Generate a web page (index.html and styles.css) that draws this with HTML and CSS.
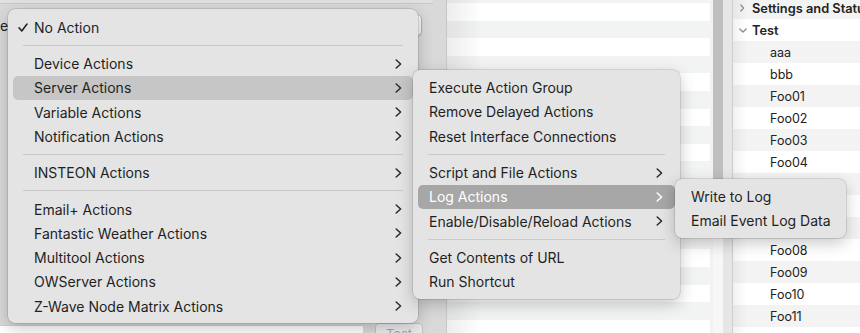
FILE: index.html
```html
<!DOCTYPE html>
<html lang="en">
<head>
<meta charset="utf-8">
<title>Actions menu</title>
<link rel="stylesheet" href="styles.css">
</head>
<body>
<div class="window">
  <section class="pane-left">
    <div class="topband"></div>
    <div class="form-row">
      <span class="form-label">e</span>
      <div class="popup"></div>
    </div>
    <div class="spacer"></div>
    <div class="bottom-row">
      <div class="field"></div>
      <div class="btn">Test</div>
    </div>
  </section>
  <section class="pane-list"></section>
  <section class="scroller">
    <div class="s-edge"></div>
    <div class="s-track"><div class="s-thumb"></div></div>
    <div class="s-gap"></div>
  </section>
  <section class="pane-outline">
    <div class="orow group first">
      <svg class="disc" width="13" height="10" viewBox="0 0 13 10"><path d="M1.8 2 L4.6 5 L1.8 8" fill="none" stroke="#8a8a8a" stroke-width="1.2" stroke-linecap="round" stroke-linejoin="round"/></svg>
      <span>Settings and Status</span>
    </div>
    <div class="orow group">
      <svg class="disc" width="13" height="10" viewBox="0 0 13 10"><path d="M0.8 4 L4 7 L7.2 4" fill="none" stroke="#8a8a8a" stroke-width="1.2" stroke-linecap="round" stroke-linejoin="round"/></svg>
      <span>Test</span>
    </div>
    <div class="orow child">aaa</div>
    <div class="orow child">bbb</div>
    <div class="orow child">Foo01</div>
    <div class="orow child">Foo02</div>
    <div class="orow child">Foo03</div>
    <div class="orow child">Foo04</div>
    <div class="orow child">Foo05</div>
    <div class="orow child">Foo06</div>
    <div class="orow child">Foo07</div>
    <div class="orow child">Foo08</div>
    <div class="orow child">Foo09</div>
    <div class="orow child">Foo10</div>
    <div class="orow child">Foo11</div>
  </section>
</div>

<div class="menu menu-main">
  <div class="item"><span class="check"><svg width="10" height="9" viewBox="0 0 10 9"><path d="M1 4.8 L3.8 8 L9 1" fill="none" stroke="#1f1f1f" stroke-width="1.5" stroke-linecap="round" stroke-linejoin="round"/></svg></span><span class="label">No Action</span></div>
  <div class="sep"></div>
  <div class="item"><span class="check"></span><span class="label">Device Actions</span><svg class="chev" width="7" height="10" viewBox="0 0 7 10"><path d="M1.2 1 L5.6 5 L1.2 9" fill="none" stroke="currentColor" stroke-width="1.5" stroke-linecap="round" stroke-linejoin="round"/></svg></div>
  <div class="item hl"><span class="check"></span><span class="label">Server Actions</span><svg class="chev" width="7" height="10" viewBox="0 0 7 10"><path d="M1.2 1 L5.6 5 L1.2 9" fill="none" stroke="currentColor" stroke-width="1.5" stroke-linecap="round" stroke-linejoin="round"/></svg></div>
  <div class="item"><span class="check"></span><span class="label">Variable Actions</span><svg class="chev" width="7" height="10" viewBox="0 0 7 10"><path d="M1.2 1 L5.6 5 L1.2 9" fill="none" stroke="currentColor" stroke-width="1.5" stroke-linecap="round" stroke-linejoin="round"/></svg></div>
  <div class="item"><span class="check"></span><span class="label">Notification Actions</span><svg class="chev" width="7" height="10" viewBox="0 0 7 10"><path d="M1.2 1 L5.6 5 L1.2 9" fill="none" stroke="currentColor" stroke-width="1.5" stroke-linecap="round" stroke-linejoin="round"/></svg></div>
  <div class="sep"></div>
  <div class="item"><span class="check"></span><span class="label">INSTEON Actions</span><svg class="chev" width="7" height="10" viewBox="0 0 7 10"><path d="M1.2 1 L5.6 5 L1.2 9" fill="none" stroke="currentColor" stroke-width="1.5" stroke-linecap="round" stroke-linejoin="round"/></svg></div>
  <div class="sep"></div>
  <div class="item"><span class="check"></span><span class="label">Email+ Actions</span><svg class="chev" width="7" height="10" viewBox="0 0 7 10"><path d="M1.2 1 L5.6 5 L1.2 9" fill="none" stroke="currentColor" stroke-width="1.5" stroke-linecap="round" stroke-linejoin="round"/></svg></div>
  <div class="item"><span class="check"></span><span class="label">Fantastic Weather Actions</span><svg class="chev" width="7" height="10" viewBox="0 0 7 10"><path d="M1.2 1 L5.6 5 L1.2 9" fill="none" stroke="currentColor" stroke-width="1.5" stroke-linecap="round" stroke-linejoin="round"/></svg></div>
  <div class="item"><span class="check"></span><span class="label">Multitool Actions</span><svg class="chev" width="7" height="10" viewBox="0 0 7 10"><path d="M1.2 1 L5.6 5 L1.2 9" fill="none" stroke="currentColor" stroke-width="1.5" stroke-linecap="round" stroke-linejoin="round"/></svg></div>
  <div class="item"><span class="check"></span><span class="label">OWServer Actions</span><svg class="chev" width="7" height="10" viewBox="0 0 7 10"><path d="M1.2 1 L5.6 5 L1.2 9" fill="none" stroke="currentColor" stroke-width="1.5" stroke-linecap="round" stroke-linejoin="round"/></svg></div>
  <div class="item"><span class="check"></span><span class="label">Z-Wave Node Matrix Actions</span><svg class="chev" width="7" height="10" viewBox="0 0 7 10"><path d="M1.2 1 L5.6 5 L1.2 9" fill="none" stroke="currentColor" stroke-width="1.5" stroke-linecap="round" stroke-linejoin="round"/></svg></div>
</div>

<div class="menu menu-sub1">
  <div class="item"><span class="label">Execute Action Group</span></div>
  <div class="item"><span class="label">Remove Delayed Actions</span></div>
  <div class="item"><span class="label">Reset Interface Connections</span></div>
  <div class="sep"></div>
  <div class="item"><span class="label">Script and File Actions</span><svg class="chev" width="7" height="10" viewBox="0 0 7 10"><path d="M1.2 1 L5.6 5 L1.2 9" fill="none" stroke="currentColor" stroke-width="1.5" stroke-linecap="round" stroke-linejoin="round"/></svg></div>
  <div class="item sel"><span class="label">Log Actions</span><svg class="chev" width="7" height="10" viewBox="0 0 7 10"><path d="M1.2 1 L5.6 5 L1.2 9" fill="none" stroke="currentColor" stroke-width="1.5" stroke-linecap="round" stroke-linejoin="round"/></svg></div>
  <div class="item"><span class="label">Enable/Disable/Reload Actions</span><svg class="chev" width="7" height="10" viewBox="0 0 7 10"><path d="M1.2 1 L5.6 5 L1.2 9" fill="none" stroke="currentColor" stroke-width="1.5" stroke-linecap="round" stroke-linejoin="round"/></svg></div>
  <div class="sep"></div>
  <div class="item"><span class="label">Get Contents of URL</span></div>
  <div class="item"><span class="label">Run Shortcut</span></div>
</div>

<div class="menu menu-sub2">
  <div class="item"><span class="label">Write to Log</span></div>
  <div class="item"><span class="label">Email Event Log Data</span></div>
</div>
</body>
</html>
```

FILE: styles.css
```css
* { box-sizing: border-box; margin: 0; padding: 0; }

html, body {
  width: 860px;
  height: 333px;
  overflow: hidden;
}

body {
  position: relative;
  font-family: "Inter", "Liberation Sans", sans-serif;
  color: #1f1f1f;
  background: #d9d9d9;
}

.window {
  display: grid;
  grid-template-columns: 447px 263px 22px 128px;
  height: 333px;
}

/* left settings pane */
.pane-left {
  display: flex;
  flex-direction: column;
  background: #d9d9d9;
  border-right: 1px solid #c8c8c8;
  overflow: hidden;
}

.topband {
  height: 4px;
  margin-right: 13px;
  background: #e0e0e0;
  border-bottom: 1px solid #c9c9c9;
}

.form-row {
  display: flex;
  align-items: center;
  height: 22px;
  margin-top: 10px;
}

.form-label {
  width: 8px;
  font-size: 14px;
  text-align: right;
}

.popup {
  width: 382px;
  height: 22px;
  margin-left: 32px;
  background: #f5f5f5;
  border: 1px solid #b3b3b3;
  border-radius: 5px;
  box-shadow: 0 1px 1px rgba(0, 0, 0, 0.12);
}

.spacer { flex: 1; }

.bottom-row {
  display: flex;
  align-items: flex-start;
  height: 10px;
}

.field {
  width: 363px;
  height: 20px;
  margin-top: 2px;
  background: #ffffff;
  border-top: 1px solid #cfcfcf;
}

.btn {
  width: 48px;
  height: 22px;
  margin-left: 12px;
  background: #ececec;
  border: 1px solid #c4c4c4;
  border-radius: 4px;
  font-size: 13px;
  line-height: 20px;
  text-align: center;
  color: #a9a9a9;
}

/* middle list */
.pane-list {
  background:
    linear-gradient(to right, rgba(0, 0, 0, 0.07), rgba(0, 0, 0, 0) 36px),
    repeating-linear-gradient(to bottom, #f2f3f3 -14.6px, #f2f3f3 3px, #ffffff 3px, #ffffff 20.6px);
}

.scroller {
  display: flex;
}

.s-edge {
  width: 3px;
  background: #f2f2f2;
}

.s-track {
  width: 10px;
  background: #f7f7f7;
}

.s-thumb {
  height: 205px;
  background: #bfbfbf;
  border-radius: 0 0 5px 5px;
}

.s-gap {
  flex: 1;
  background: #e6e6e6;
}

/* outline pane */
.pane-outline {
  border-left: 1px solid #cdcdcd;
  background:
    linear-gradient(to right, rgba(0, 0, 0, 0.05), rgba(0, 0, 0, 0) 14px),
    repeating-linear-gradient(to bottom, #f3f3f3 -3px, #f3f3f3 19px, #ffffff 19px, #ffffff 41px);
  overflow: hidden;
  white-space: nowrap;
}

.orow {
  display: flex;
  align-items: center;
  height: 22px;
  font-size: 12.5px;
  color: #222;
}

.orow.first { margin-top: -3px; }

.orow.group {
  padding-left: 6px;
  font-size: 12.8px;
  font-weight: 600;
}

.orow.group .disc { flex: none; }

.orow.child { padding-left: 37px; }

/* menus */
.menu {
  position: absolute;
  padding: 6px 5px 5px;
  background: #e4e4e4;
  border-radius: 7px;
  box-shadow: 0 0 0 0.5px rgba(0, 0, 0, 0.2), 0 5px 16px rgba(0, 0, 0, 0.22);
  font-size: 14px;
  color: #1f1f1f;
}

.menu-main { left: 8px;   top: 9px;     width: 410px; z-index: 1; }
.menu-sub1 { left: 413px; top: 69.5px;  width: 267px; z-index: 2; }
.menu-sub2 { left: 675px; top: 178.5px; width: 171px; z-index: 3; }

.item {
  display: flex;
  align-items: center;
  height: 24.25px;
  padding: 0 12px 0 11px;
  border-radius: 5px;
  white-space: nowrap;
}

.menu-main .item { padding: 0 11px 0 5px; }

.item .label { flex: 1; }

.check {
  display: flex;
  align-items: center;
  width: 16px;
  flex: none;
}

.chev { flex: none; color: #2a2a2a; }

.item.hl { background: #c6c6c6; }

.item.sel { background: #a7a7a7; color: #ffffff; }
.item.sel .chev { color: #ffffff; }

.sep {
  display: flex;
  align-items: center;
  height: 12.125px;
  padding: 0 10px;
}

.sep::before {
  content: "";
  flex: 1;
  height: 1px;
  background: #c9c9c9;
}
```
